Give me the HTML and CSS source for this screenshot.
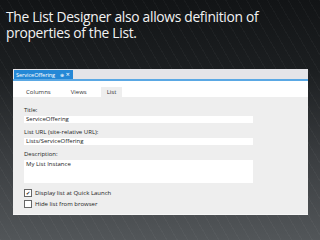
FILE: index.html
```html
<!DOCTYPE html>
<html lang="en">

<head>
  <meta charset="UTF-8">
  <title>List Designer</title>
  <link rel="stylesheet" href="styles.css">
</head>

<body>
  <h1 class="headline">The List Designer also allows definition of properties of the List.</h1>

  <div class="designer">
    <div class="doc-tabs">
      <span class="doc-tab">ServiceOffering <span class="doc-tab__pin">&#8853;</span> <span class="doc-tab__close">&times;</span></span>
    </div>
    <div class="tabs">
      <span class="tab">Columns</span>
      <span class="tab">Views</span>
      <span class="tab tab--active">List</span>
    </div>
    <form class="props">
      <label class="props__label" for="title">Title:</label>
      <input class="props__input" id="title" type="text" value="ServiceOffering">
      <label class="props__label" for="url">List URL (site-relative URL):</label>
      <input class="props__input" id="url" type="text" value="Lists/ServiceOffering">
      <label class="props__label" for="desc">Description:</label>
      <textarea class="props__input props__area" id="desc">My List Instance</textarea>
      <label class="check"><span class="check__box check__box--on">&#10004;</span>Display list at Quick Launch</label>
      <label class="check"><span class="check__box"></span>Hide list from browser</label>
    </form>
  </div>
</body>

</html>
```

FILE: styles.css
```css
html,
body {
  height: 100%;
}

body {
  margin: 0;
  font-family: "Open Sans", "Noto Sans", sans-serif;
  background:
    repeating-linear-gradient(60deg, rgba(255, 255, 255, 0.03) 0 1px, transparent 1px 9px),
    linear-gradient(180deg, #121416 0%, #1c1f21 30%, #3a3d40 65%, #525659 100%);
  overflow: hidden;
}

.headline {
  margin: 0;
  padding: 9px 0 0 6px;
  height: 69px;
  box-sizing: border-box;
  font-size: 13.8px;
  font-weight: normal;
  line-height: 16px;
  color: #f2f2f2;
  letter-spacing: -0.3px;
}

.designer {
  margin-left: 13px;
  width: 295px;
  height: 146px;
  background: #eeeeee;
  box-sizing: border-box;
  border-bottom: 1px solid #f6f6f6;
}

.doc-tabs {
  height: 12px;
  padding-top: 1px;
  box-sizing: border-box;
  background: #e4e4e8;
  border-bottom: 2px solid #5aa8e4;
}

.doc-tab {
  display: inline-block;
  width: 59px;
  height: 9px;
  margin-left: 1px;
  padding-left: 2px;
  box-sizing: border-box;
  background: #2588d6;
  color: #fff;
  font-size: 5.7px;
  line-height: 9px;
  white-space: nowrap;
  vertical-align: top;
  letter-spacing: -0.1px;
}

.doc-tab__pin {
  margin-left: 3px;
  font-size: 5px;
}

.doc-tab__close {
  margin-left: 1px;
  font-size: 7px;
}

.tabs {
  display: flex;
  align-items: flex-end;
  height: 16px;
  padding-left: 7px;
  background: #fff;
  box-sizing: border-box;
}

.tab {
  height: 10px;
  padding: 0 6px;
  margin-right: 8px;
  font-size: 6px;
  line-height: 10px;
  color: #333;
}

.tab--active {
  background: #eeeeee;
}

.props {
  display: flex;
  flex-direction: column;
  padding: 9px 0 0 11px;
}

.props__label {
  font-size: 6px;
  line-height: 8px;
  height: 8px;
  color: #222;
}

.props__input {
  width: 229px;
  height: 7px;
  margin: 2px 0 5px;
  padding: 0 0 0 2px;
  box-sizing: border-box;
  border: none;
  background: #fff;
  font: inherit;
  font-size: 6px;
  line-height: 7px;
  color: #222;
}

.props__area {
  height: 23px;
  margin-bottom: 4px;
  resize: none;
  padding-top: 1px;
}

.check {
  display: flex;
  align-items: center;
  gap: 3px;
  height: 11px;
  font-size: 6px;
  color: #222;
}

.check__box {
  width: 6px;
  height: 6px;
  border: 1px solid #666;
  background: #fff;
  font-size: 5px;
  line-height: 6px;
  text-align: center;
  color: #222;
}
```
